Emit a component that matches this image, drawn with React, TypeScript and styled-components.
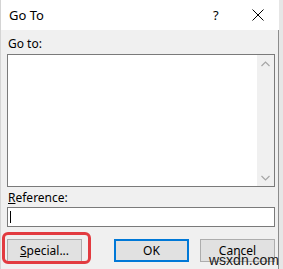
import React from 'react'
import styled, { createGlobalStyle } from 'styled-components'

const GlobalStyle = createGlobalStyle`
  html, body {
    margin: 0;
    padding: 0;
    background: #e6e6e6;
  }
  body {
    font-family: 'Noto Sans', 'Open Sans', sans-serif;
    font-size: 12px;
    color: #000;
  }
`

const Dialog = styled.div`
  position: relative;
  width: 279px;
  height: 269px;
  background: #f0f0f0;
  border-left: 1px solid #d4d4d4;
  border-right: 1px solid #8c8c8c;
  box-sizing: border-box;
  display: flex;
  flex-direction: column;
`

const TitleBar = styled.div`
  height: 30px;
  background: #fff;
  display: flex;
  align-items: center;
  padding-left: 8px;
  margin-right: -1px;
`

const Title = styled.div`
  flex: 1;
  font-size: 13px;
  line-height: 15px;
`

const HelpMark = styled.div`
  width: 14px;
  font-size: 13px;
  line-height: 14px;
  margin-right: 25px;
`

const CloseBox = styled.div`
  width: 12px;
  height: 12px;
  margin-right: 15px;
  display: flex;
`

const Content = styled.div`
  flex: 1;
  padding: 7px 3px 0 6px;
  display: flex;
  flex-direction: column;
`

const Label = styled.div`
  font-size: 12px;
  line-height: 14px;
  padding-left: 1px;
`

const ListBox = styled.div`
  margin-top: 3px;
  height: 133px;
  border: 1px solid #7a7a7a;
  background: #fff;
  box-sizing: border-box;
  display: flex;
  justify-content: flex-end;
`

const ScrollBar = styled.div`
  width: 17px;
  background: #f0f0f0;
  display: flex;
  flex-direction: column;
  justify-content: space-between;
  align-items: center;
  padding: 6px 0 5px;
`

const RefLabel = styled(Label)`
  margin-top: 4px;
  u {
    text-decoration: underline;
  }
`

const Input = styled.div`
  margin-top: 2px;
  height: 20px;
  border: 1px solid #7a7a7a;
  background: #fff;
  box-sizing: border-box;
  display: flex;
  align-items: center;
  padding-left: 2px;
`

const Caret = styled.div`
  width: 1px;
  height: 12px;
  background: #000;
`

const ButtonRow = styled.div`
  margin-top: 12px;
  display: flex;
  align-items: center;
  justify-content: space-between;
`

const Group = styled.div`
  display: flex;
  gap: 11px;
`

const Button = styled.div<{ $default?: boolean }>`
  width: 75px;
  height: 23px;
  box-sizing: border-box;
  background: #e1e1e1;
  border: ${({ $default }) => ($default ? '2px solid #0078d7' : '1px solid #adadad')};
  display: flex;
  align-items: center;
  justify-content: center;
  font-size: 12px;
  line-height: 14px;
`

const Highlight = styled.div`
  position: absolute;
  left: 1px;
  top: 232px;
  width: 89px;
  height: 32px;
  border: 3px solid #e23b40;
  border-radius: 6px;
  box-sizing: border-box;
`

const Watermark = styled.div`
  position: absolute;
  left: 208px;
  top: 252px;
  font-family: 'Liberation Sans', Arial, sans-serif;
  font-size: 14px;
  line-height: 16px;
  color: #1a1a1a;
`

const Chevron = ({ up }: { up?: boolean }) => (
  <svg width="9" height="6" viewBox="0 0 9 6">
    <path
      d={up ? 'M0.5 5 L4.5 1 L8.5 5' : 'M0.5 1 L4.5 5 L8.5 1'}
      fill="none"
      stroke="#a6a6a6"
      strokeWidth="1.2"
    />
  </svg>
)

export default function App() {
  return (
    <>
      <GlobalStyle />
      <Dialog>
        <TitleBar>
          <Title>Go To</Title>
          <HelpMark>?</HelpMark>
          <CloseBox>
            <svg width="12" height="12" viewBox="0 0 12 12">
              <path d="M0.5 0.5 L11.5 11.5 M11.5 0.5 L0.5 11.5" stroke="#000" strokeWidth="1" />
            </svg>
          </CloseBox>
        </TitleBar>
        <Content>
          <Label>Go to:</Label>
          <ListBox>
            <ScrollBar>
              <Chevron up />
              <Chevron />
            </ScrollBar>
          </ListBox>
          <RefLabel>
            <u>R</u>eference:
          </RefLabel>
          <Input>
            <Caret />
          </Input>
          <ButtonRow>
            <Button>
              <span>
                <u>S</u>pecial...
              </span>
            </Button>
            <Group>
              <Button $default>OK</Button>
              <Button>Cancel</Button>
            </Group>
          </ButtonRow>
        </Content>
        <Highlight />
        <Watermark>wsxdn.com</Watermark>
      </Dialog>
    </>
  )
}
